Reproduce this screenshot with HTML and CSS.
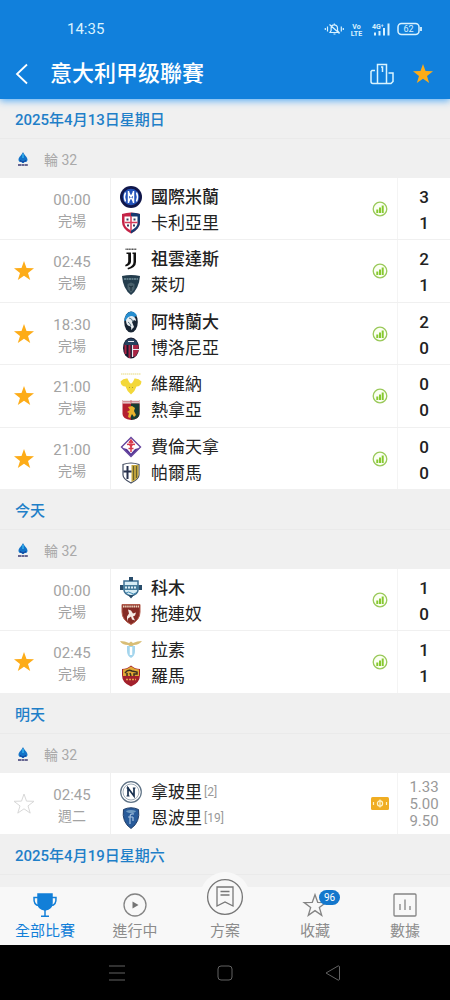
FILE: index.html
```html
<!DOCTYPE html>
<html lang="zh-Hant">
<head>
<meta charset="utf-8">
<meta name="viewport" content="width=device-width, initial-scale=1">
<title>意大利甲级聯賽</title>
<link rel="stylesheet" href="styles.css">
</head>
<body>
<svg class="sprite" aria-hidden="true">
  <symbol id="star" viewBox="0 0 22 22"><path d="M11 1l2.500 7.100 7.500.2-6 4.600 2.200 7.200L11 15.800 4.800 20.100 7 12.900 1 8.300l7.500-.2z"/></symbol>
  <symbol id="stats" viewBox="0 0 16 16"><circle cx="8" cy="8" r="6.800" fill="#fbfff3" stroke="#9ac95a" stroke-width="1.300"/><path d="M5.300 8.500V12M8 6.500V12M10.700 4.500V12" stroke="#86c92f" stroke-width="2"/></symbol>
  <symbol id="league" viewBox="0 0 12 16"><path d="M6 1C5 4 1.500 6 1.500 8.700 1.500 11 4 11.500 5.300 10.500L4.500 12h3l-.8-1.500C8 11.500 10.500 11 10.500 8.700 10.500 6 7 4 6 1z" fill="#1273c8"/><path d="M6 3v4" stroke="#35b2ec" stroke-width="1.500"/><path d="M3 9.500l3 1.500 3-1.500" stroke="#123a92" fill="none"/><path d="M1 14h10" stroke="#3b3a72" stroke-width="1.500" stroke-dasharray="3 .4"/></symbol>
</svg>
<div class="app">
  <header class="top">
    <div class="status">
      <span class="clock">14:35</span>
      <svg class="status-icons" viewBox="0 0 98 16" width="98" height="16" fill="none" stroke="#d9f2ff" stroke-width="1.200" aria-hidden="true">
        <path d="M6 11.500h9l-1.500-2V7a3.200 3.200 0 0 0-6.400 0v2.500zM9.500 13h2M10.300 2.500v1M5.500 3.500l10 9M3.500 5.500v5M17.300 5.500v5M1.300 7v2M19.300 7v2"/>
        <text x="32.500" y="7.500" text-anchor="middle" class="tiny">Vo</text>
        <text x="32.500" y="14.500" text-anchor="middle" class="tiny">LTE</text>
        <text x="48" y="7.500" class="tiny">4G⁺</text>
        <path d="M51 11.500V14.500M55.500 10V14.500M60 7V14.500M64.500 2.500V14.500" stroke-width="2"/>
        <rect x="74" y="2.500" width="21" height="11" rx="3.500" stroke-width="1.500"/><path d="M97 6v4" stroke-width="1.800"/>
        <text x="84.500" y="11.200" text-anchor="middle" class="battery">62</text>
      </svg>
    </div>
    <div class="titlebar">
      <button class="icon-btn" aria-label="返回"><svg width="14" height="22" viewBox="0 0 14 22" fill="none" stroke="#fff" stroke-width="1.800"><path d="M12 1.500L2 11l10 9.500"/></svg></button>
      <h1>意大利甲级聯賽</h1>
      <button class="icon-btn" aria-label="積分榜"><svg width="24" height="22" viewBox="0 0 24 22" fill="none" stroke="#d9f4ff" stroke-width="1.500"><path d="M7.500 20.500H3a2 2 0 0 1-2-2V8.500l1-1h3M7.500 20.500V1.500h9v19zM16.500 20.500H21l2-2V10h-4.500M11 4h1.500v5"/></svg></button>
      <button class="icon-btn fav on" aria-label="收藏聯賽"><svg width="22" height="22"><use href="#star"/></svg></button>
    </div>
  </header>

  <main class="list">
    <section>
      <h2>2025年4月13日星期日</h2>
      <h3><svg width="12" height="16"><use href="#league"/></svg>輪 32</h3>
      <article class="match">
        <span></span>
        <div class="time"><time>00:00</time><span>完場</span></div>
        <div class="teams">
          <div class="team win"><svg viewBox="0 0 22 22"><circle cx="11" cy="11" r="11" fill="#10164a"/><circle cx="11" cy="11" r="8.300" fill="#2453ba"/><path d="M5.500 6.500q-2 4.500 0 9M16.500 6.500q2 4.500 0 9M8.500 5v12M13.500 5v12M8.500 6l5 10M13.500 6l-5 10" stroke="#fff" stroke-width="1.500" fill="none"/></svg>國際米蘭</div>
          <div class="team"><svg viewBox="0 0 22 22"><path d="M2 2q9-3 18 0v8q0 7-9 11.500Q2 17 2 10z" fill="#c42447"/><path d="M11 .7q5 0 9 1.300v8q0 7-9 11.500z" fill="#173a70"/><path d="M4.500 4.500h13V11q0 4-6.500 7.500Q4.500 15 4.500 11z" fill="#fff"/><path d="M11 4v14M4.500 10.500h13" stroke="#d43a58" stroke-width="1.500"/><path d="M6.500 7.500h2M13.500 7.500h2M7 13.500h2M13 13.500h2" stroke="#34405f" stroke-width="2.200"/></svg>卡利亞里</div>
        </div>
        <button class="badge" aria-label="數據"><svg width="16" height="16"><use href="#stats"/></svg></button>
        <div class="score"><span>3</span><span>1</span></div>
      </article>
      <article class="match">
        <button class="fav on" aria-label="收藏"><svg width="22" height="22"><use href="#star"/></svg></button>
        <div class="time"><time>02:45</time><span>完場</span></div>
        <div class="teams">
          <div class="team win"><svg viewBox="0 0 22 22"><path d="M5.500 1.200h11" stroke="#555" stroke-width="1.500" stroke-dasharray="1.200 .4"/><path d="M6.500 4.500H11v9q0 3.500-5.500 5l-.3-1.500q3-1.500 3-3.500V6H6.500zM12.500 4.500H16v9.500q0 5.500-8 7.500l-.5-1.500q6-2 6-6V6h-1z" fill="#111"/></svg>祖雲達斯</div>
          <div class="team"><svg viewBox="0 0 22 22"><path d="M2 2q9-2 18 0-1 13-9 19Q3 15 2 2z" fill="#243d4d"/><path d="M4 5h14" stroke="#5d7b87" stroke-width="2" stroke-dasharray="2 .5"/><path d="M7.500 10l3.500-1.500 3.500 1.500v5l-3.500 4-3.500-4z" fill="#4a616c"/><path d="M9 12l2 1 2-1M11 13v4" stroke="#182b37" fill="none"/></svg>萊切</div>
        </div>
        <button class="badge" aria-label="數據"><svg width="16" height="16"><use href="#stats"/></svg></button>
        <div class="score"><span>2</span><span>1</span></div>
      </article>
      <article class="match">
        <button class="fav on" aria-label="收藏"><svg width="22" height="22"><use href="#star"/></svg></button>
        <div class="time"><time>18:30</time><span>完場</span></div>
        <div class="teams">
          <div class="team win"><svg viewBox="0 0 22 22"><ellipse cx="11" cy="11" rx="6.800" ry="10.500" fill="#172433"/><path d="M11 .5Q5 1.500 4.200 10l6.800-2 6-3.500Q14.500.5 11 .5z" fill="#268ed0"/><path d="M6 9q2-4 6-4 4 1 4 5l-2-1-2 2 2 5-3 3q1-4-2-4-3-1-3-6z" fill="#e9eef1"/><path d="M9 7q3 0 4 4M8 11q2 1 3 4" stroke="#55717f" fill="none"/></svg>阿特蘭大</div>
          <div class="team"><svg viewBox="0 0 22 22"><ellipse cx="11" cy="11" rx="8" ry="10.500" fill="#17192e"/><path d="M5.500 7v10M9.500 8v13" stroke="#a92444" stroke-width="2"/><path d="M13 8h5.500v6l-3 5.500H13z" fill="#a92444"/><path d="M4.500 5.500q6.500-8 13 0V8h-13z" fill="#25415e"/><path d="M8 4.500h6M12.500 8v12M12.500 12.500h7" stroke="#e8e8ef" stroke-width="1.200"/></svg>博洛尼亞</div>
        </div>
        <button class="badge" aria-label="數據"><svg width="16" height="16"><use href="#stats"/></svg></button>
        <div class="score"><span>2</span><span>0</span></div>
      </article>
      <article class="match">
        <button class="fav on" aria-label="收藏"><svg width="22" height="22"><use href="#star"/></svg></button>
        <div class="time"><time>21:00</time><span>完場</span></div>
        <div class="teams">
          <div class="team"><svg viewBox="0 0 22 22"><path d="M1 1h20" stroke="#e6da80" stroke-dasharray="1.500 .5"/><path d="M.5 8.500q3-3.500 7-3 2 5 3.500 5t3.500-5q4-.5 7 3-.5 5-5 5-1.500 5-5.500 8-4-3-5.500-8-4.500 0-5-5z" fill="#f3d83a"/><path d="M9 14.500h.8M12.200 14.500h.8" stroke="#9b8932" stroke-width="1.200"/></svg>維羅納</div>
          <div class="team"><svg viewBox="0 0 22 22"><path d="M2.500 1h17v14q0 5-8.500 6-8.500-1-8.500-6z" fill="#b5202f"/><path d="M2.500 1H19.500v3.500h-17z" fill="#eee7e7"/><path d="M11 1v3M3 2.800h16" stroke="#ca6b72"/><path d="M11 4.500h8.500V15q0 5-8.500 6z" fill="#173b33"/><path d="M8 8l4-1 3 2-1 3 2 4-2 2-2-3-2 4-2-1 1-4-2-1 3-2z" fill="#e9b22d"/></svg>熱拿亞</div>
        </div>
        <button class="badge" aria-label="數據"><svg width="16" height="16"><use href="#stats"/></svg></button>
        <div class="score"><span>0</span><span>0</span></div>
      </article>
      <article class="match">
        <button class="fav on" aria-label="收藏"><svg width="22" height="22"><use href="#star"/></svg></button>
        <div class="time"><time>21:00</time><span>完場</span></div>
        <div class="teams">
          <div class="team"><svg viewBox="0 0 22 22"><path d="M11 1.500L20.500 11 11 20.500 1.500 11z" fill="#fff" stroke="#65449c" stroke-width="1.400"/><path d="M3 12l4 1 4 4.500 4-4.500 4-1-8 8z" fill="#573798"/><path d="M11 4v12M7 8.500q4-1 4 4 0-5 4-4M8.500 12.500h5M9 7l2-3 2 3" stroke="#d83a4c" stroke-width="1.500" fill="none"/></svg>費倫天拿</div>
          <div class="team"><svg viewBox="0 0 22 22"><path d="M3 2.500q8-3 16 0V13q0 4-8 8-8-4-8-8z" fill="#fff" stroke="#475064" stroke-width="1.200"/><path d="M11.500 3h7V13q0 4-7 7z" fill="#c9a93e"/><path d="M13.500 4v14M16.500 4v12" stroke="#66602f" stroke-width="1.200"/><path d="M7.500 4v13M3.500 9.500h8" stroke="#27304c" stroke-width="2"/></svg>帕爾馬</div>
        </div>
        <button class="badge" aria-label="數據"><svg width="16" height="16"><use href="#stats"/></svg></button>
        <div class="score"><span>0</span><span>0</span></div>
      </article>
    </section>

    <section>
      <h2>今天</h2>
      <h3><svg width="12" height="16"><use href="#league"/></svg>輪 32</h3>
      <article class="match">
        <span></span>
        <div class="time"><time>00:00</time><span>完場</span></div>
        <div class="teams">
          <div class="team win"><svg viewBox="0 0 22 22"><path d="M4 4h14v9q0 4-7 6-7-2-7-6z" fill="#d8edf5" stroke="#3c6f92" stroke-width="1.500"/><path d="M9 0h4v4H9zM0 8h4v5H0zM18 8h4v5h-4zM8 18h6l-3 3.500z" fill="#294d6b"/><path d="M3 8h16v5H3z" fill="#467b9a"/><path d="M5 10.500h12" stroke="#dceef5" stroke-width="2" stroke-dasharray="2 1"/><path d="M6 16q2.500-2 5 0t5 0" stroke="#458cb5" fill="none"/></svg>科木</div>
          <div class="team"><svg viewBox="0 0 22 22"><path d="M2 1.500h18V9q0 8-9 12.500Q2 17 2 9z" fill="#852b25" stroke="#b25b4b"/><path d="M3 3.500h16" stroke="#efd5bd" stroke-width="2" stroke-dasharray="1.500 .6"/><path d="M8 6.500l3 1 2 3 3-1-1 3-2 1 2 4-3-1-1-3-3 2-1 3 0-5 2-3z" fill="#f5ebe5"/></svg>拖連奴</div>
        </div>
        <button class="badge" aria-label="數據"><svg width="16" height="16"><use href="#stats"/></svg></button>
        <div class="score"><span>1</span><span>0</span></div>
      </article>
      <article class="match">
        <button class="fav on" aria-label="收藏"><svg width="22" height="22"><use href="#star"/></svg></button>
        <div class="time"><time>02:45</time><span>完場</span></div>
        <div class="teams">
          <div class="team"><svg viewBox="0 0 22 22"><path d="M0 2q5 0 9 2l2-1.500L13 4q4-2 9-2-3 4-8 4l-3 2-3-2q-6 0-8-4z" fill="#d8bd76"/><path d="M7 7h8v5q0 5-4 7-4-2-4-7z" fill="#a4d5ed"/><path d="M11 8v8" stroke="#fff" stroke-width="2.500"/></svg>拉素</div>
          <div class="team"><svg viewBox="0 0 22 22"><path d="M2 4q5 0 9-3.500Q15 4 20 4v6q0 8-9 11.500Q2 18 2 10z" fill="#a3202c"/><path d="M3 4.500q5-.5 8-3 3 2.500 8 3V11H3z" fill="#e0a834"/><path d="M5 8q3-4 7-2l5 1v2h-3v2M7 8v3M10 8l1 3" stroke="#3c3020" stroke-width="1.500" fill="none"/><path d="M6 14.500h10" stroke="#e7a44c" stroke-width="1.500" stroke-dasharray="2 1"/></svg>羅馬</div>
        </div>
        <button class="badge" aria-label="數據"><svg width="16" height="16"><use href="#stats"/></svg></button>
        <div class="score"><span>1</span><span>1</span></div>
      </article>
    </section>

    <section>
      <h2>明天</h2>
      <h3><svg width="12" height="16"><use href="#league"/></svg>輪 32</h3>
      <article class="match">
        <button class="fav" aria-label="收藏"><svg width="22" height="22"><use href="#star"/></svg></button>
        <div class="time"><time>02:45</time><span>週二</span></div>
        <div class="teams">
          <div class="team"><svg viewBox="0 0 22 22"><circle cx="11" cy="11" r="10.300" fill="#fff" stroke="#5e7285" stroke-width="1.200"/><circle cx="11" cy="11" r="8" fill="none" stroke="#8797a6" stroke-width=".8"/><path d="M8 15V7l6 8V7" fill="none" stroke="#172f4f" stroke-width="1.700"/><path d="M6.500 7H9M12.800 7h2.700M6.500 15h3" stroke="#172f4f"/></svg>拿玻里<small>[2]</small></div>
          <div class="team"><svg viewBox="0 0 22 22"><path d="M3.500 2.500Q11-1 18.500 2.500 20.500 15 11 21.500 1.500 15 3.500 2.500z" fill="#285b9a" stroke="#233f69"/><path d="M6 4q5-2 10 0-1 2-5 2T6 4z" fill="#709bc2"/><path d="M14 7q-4-1-4 3v7M8 10h5M13 10v4" stroke="#a6c2df" stroke-width="1.200" fill="none"/></svg>恩波里<small>[19]</small></div>
        </div>
        <button class="badge" aria-label="賠率"><svg width="18" height="13" viewBox="0 0 18 13"><rect width="18" height="13" rx="1.500" fill="#f0ad22"/><g fill="none" stroke="#fff3c8" stroke-width="1.200"><circle cx="9" cy="6.500" r="2.600"/><path d="M9 2.500v8M2.500 5v3M15.500 5v3"/></g></svg></button>
        <div class="odds"><span>1.33</span><span>5.00</span><span>9.50</span></div>
      </article>
    </section>

    <section>
      <h2>2025年4月19日星期六</h2>
    </section>
  </main>

  <nav class="tabs">
    <a class="active" href="#all"><svg width="26" height="26" viewBox="0 0 26 26" fill="none" stroke="#127fd8" stroke-width="1.500"><path d="M6 2h14v9q0 6-7 7-7-1-7-7z" fill="#127fd8"/><path d="M6 5.500H2q-.5 8 5 8M20 5.500h4q.5 8-5 8M13 18v6M9 24.200h8"/></svg>全部比賽</a>
    <a href="#live"><svg width="26" height="26" viewBox="0 0 26 26"><circle cx="13" cy="13" r="11" fill="none" stroke="#848484" stroke-width="1.300"/><path d="M10.500 9.500v7l6-3.500z" fill="#747474"/></svg>進行中</a>
    <a class="plan" href="#plan"><span class="bump"><svg width="38" height="38" viewBox="0 0 38 38" fill="none" stroke="#777" stroke-width="1.300"><circle cx="19" cy="19" r="17.400"/><path d="M11 9h16v19l-8-4-8 4zM14.500 13.500h9M14.500 17h9"/></svg></span>方案</a>
    <a href="#fav"><span class="with-count"><svg width="26" height="26" viewBox="0 0 24 24" fill="none" stroke="#848484" stroke-width="1.200"><path d="M12 2.500l2.500 7 7.500.2-6 4.500 2.200 7.300-6.200-4.300-6.200 4.300L8 14.200 2 9.700l7.500-.2z"/></svg><b>96</b></span>收藏</a>
    <a href="#data"><svg width="26" height="26" viewBox="0 0 26 26" fill="none" stroke="#848484" stroke-width="1.300"><rect x="2" y="2" width="22" height="22" rx="1"/><path d="M8 12v6M13 7.500V18M18 14v4"/></svg>數據</a>
  </nav>
  <div class="system">
    <button aria-label="最近"><svg width="18" height="18" viewBox="0 0 18 18"><path d="M1 2h16M1 9h16M1 16h16"/></svg></button>
    <button aria-label="主畫面"><svg width="18" height="18" viewBox="0 0 18 18"><rect x="2" y="2" width="14" height="14" rx="3"/></svg></button>
    <button aria-label="返回"><svg width="18" height="18" viewBox="0 0 18 18"><path d="M15.500 2.500v13q-.5 1-1.500.5L2 9l12-7q1-.5 1.500.5z"/></svg></button>
  </div>
</div>
</body>
</html>
```
FILE: styles.css
```css
* { box-sizing: border-box; }
body {
  margin: 0;
  background: #f0f0f0;
  color: #222;
  font-family: Roboto, "Noto Sans CJK TC", sans-serif;
}
button {
  display: flex;
  align-items: center;
  justify-content: center;
  padding: 0;
  border: 0;
  background: none;
  font: inherit;
}
svg { display: block; flex: none; }
h1, h2, h3 { margin: 0; }
.sprite { display: none; }
.app { display: flex; flex-direction: column; height: 100vh; }

.top {
  z-index: 1;
  background: #1180dc;
  color: #fff;
  box-shadow: 0 2px 7px #5fb0f5;
}
.status {
  display: flex;
  align-items: center;
  justify-content: space-between;
  height: 48px;
  padding: 10px 28px 0 67px;
  color: #d9f2ff;
  font-size: 15px;
}
.battery { font-size: 9px; fill: #d9f2ff; stroke: none; }
.tiny { font-size: 7px; font-weight: 700; fill: #d9f2ff; stroke: none; }
.titlebar {
  display: flex;
  align-items: center;
  height: 51px;
  padding: 0 16px 0 15px;
}
.titlebar h1 {
  flex: 1;
  padding-left: 21px;
  font-size: 22px;
  line-height: 30px;
  font-weight: 500;
}
.titlebar .fav { margin-left: 18px; }

.list { flex: 1; min-height: 0; overflow: hidden; }
h2 {
  height: 40px;
  padding-left: 15px;
  border-bottom: 1px solid #eaeaea;
  color: #1f7fc8;
  font-size: 15px;
  line-height: 42px;
  font-weight: 500;
}
h3 {
  display: flex;
  align-items: center;
  gap: 15px;
  height: 39px;
  padding-left: 17px;
  color: #a9a9a9;
  font-size: 14px;
  font-weight: 400;
}
.match {
  display: grid;
  grid-template-columns: 48px 62px 1fr 34px 53px;
  height: 62px;
  border-bottom: 1px solid #f0f0f0;
  background: #fff;
}
.match:nth-of-type(even) { height: 63px; }
.fav { fill: none; stroke: #d8d8d8; }
.fav.on { fill: #fdac18; stroke: none; }
.time {
  display: flex;
  flex-direction: column;
  align-items: center;
  padding: 12px 14px 0 0;
  color: #a3a3a3;
  font-size: 15px;
  line-height: 21px;
}
.time span { font-size: 14px; white-space: nowrap; }
.teams { padding: 6px 0 0 9px; border-left: 1px solid #f0f0f0; }
.team {
  display: flex;
  align-items: center;
  gap: 9px;
  font-size: 17px;
  line-height: 26px;
}
.team svg { width: 22px; height: 22px; }
.team small { margin-left: -7px; color: #999; font-size: 12px; }
.win { font-weight: 500; }
.score, .odds {
  display: flex;
  flex-direction: column;
  align-items: center;
  padding-top: 6px;
  border-left: 1px solid #f4f4f4;
}
.score { font-size: 17px; line-height: 26px; font-weight: 500; }
.odds { color: #999; font-size: 15px; line-height: 17px; }

.tabs {
  z-index: 1;
  display: grid;
  grid-template-columns: repeat(5, 1fr);
  grid-template-rows: 100%;
  height: 58px;
  background: #f8f8f8;
}
.tabs a {
  display: flex;
  flex-direction: column;
  align-items: center;
  justify-content: flex-end;
  gap: 2px;
  padding-bottom: 3px;
  color: #8c8c8c;
  font-size: 15px;
  line-height: 22px;
  text-decoration: none;
}
.tabs .active { color: #127fd8; }
.bump {
  display: flex;
  flex: none;
  align-items: center;
  justify-content: center;
  width: 50px;
  height: 50px;
  margin-bottom: -4px;
  border-radius: 50%;
  background: #f8f8f8;
}
.with-count { position: relative; }
.with-count b {
  position: absolute;
  top: -2px;
  left: 17px;
  width: 21px;
  border-radius: 8px;
  background: #1477cc;
  color: #fff;
  font-size: 10px;
  line-height: 15px;
  font-weight: 400;
  text-align: center;
}
.system {
  display: flex;
  justify-content: space-between;
  height: 55px;
  padding: 0 108px;
  background: #000;
}
.system svg { fill: none; stroke: #626262; stroke-width: 1; }
```
